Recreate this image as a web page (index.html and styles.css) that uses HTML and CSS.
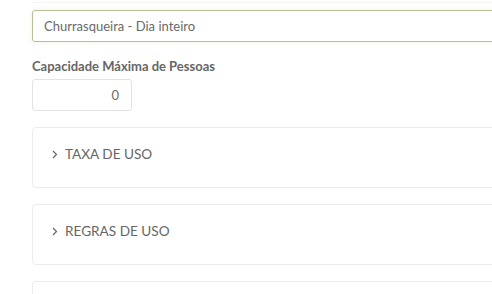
FILE: index.html
```html
<!DOCTYPE html>
<html lang="pt">
<head>
<meta charset="utf-8">
<link rel="stylesheet" href="styles.css">
</head>
<body>
<div class="page">
  <div class="top-line"></div>
  <div class="form">
    <div class="text-input">Churrasqueira - Dia inteiro</div>
    <div class="field">
      <label class="label">Capacidade Máxima de Pessoas</label>
      <div class="num-input">0</div>
    </div>
    <div class="panel">
      <div class="panel-head"><svg class="chev" width="6" height="9" viewBox="0 0 6 9"><path d="M1 1 L4.5 4.5 L1 8" fill="none" stroke="#666" stroke-width="1.2"/></svg><span>TAXA DE USO</span></div>
    </div>
    <div class="panel">
      <div class="panel-head"><svg class="chev" width="6" height="9" viewBox="0 0 6 9"><path d="M1 1 L4.5 4.5 L1 8" fill="none" stroke="#666" stroke-width="1.2"/></svg><span>REGRAS DE USO</span></div>
    </div>
    <div class="panel"></div>
  </div>
</div>
</body>
</html>
```
FILE: styles.css
```css
html, body {
  margin: 0;
  padding: 0;
  background: #fff;
  overflow: hidden;
}
body {
  font-family: Lato, "Open Sans", sans-serif;
  color: #666;
}
.page {
  width: 492px;
  height: 294px;
  overflow: hidden;
}
.top-line {
  height: 2px;
  border-bottom: 1px solid #f6f6f6;
  margin-left: 32px;
}
.form {
  margin-left: 32px;
  width: 520px;
  padding-top: 7px;
  display: flex;
  flex-direction: column;
}
.text-input {
  box-sizing: border-box;
  height: 32px;
  border: 1px solid #b7c195;
  border-radius: 3px;
  padding: 0 11px;
  font-size: 13px;
  line-height: 30px;
  color: #6a6a6a;
  box-shadow: 0 0 4px rgba(200, 215, 150, 0.35);
}
.field {
  margin-top: 16px;
  display: flex;
  flex-direction: column;
}
.label {
  font-size: 13px;
  font-weight: bold;
  line-height: 16px;
  color: #666;
}
.num-input {
  box-sizing: border-box;
  margin-top: 5px;
  width: 100px;
  height: 32px;
  border: 1px solid #e3e3e3;
  border-radius: 3px;
  padding: 0 12px;
  text-align: right;
  font-size: 13px;
  line-height: 30px;
  color: #6a6a6a;
}
.panel {
  box-sizing: border-box;
  margin-top: 16px;
  height: 61px;
  border: 1px solid #ececec;
  border-radius: 4px;
}
.panel-head {
  display: flex;
  align-items: center;
  gap: 7px;
  padding: 18px 0 0 19px;
  font-size: 13.6px;
  line-height: 17px;
  color: #666;
}
.chev {
  display: block;
}
```
